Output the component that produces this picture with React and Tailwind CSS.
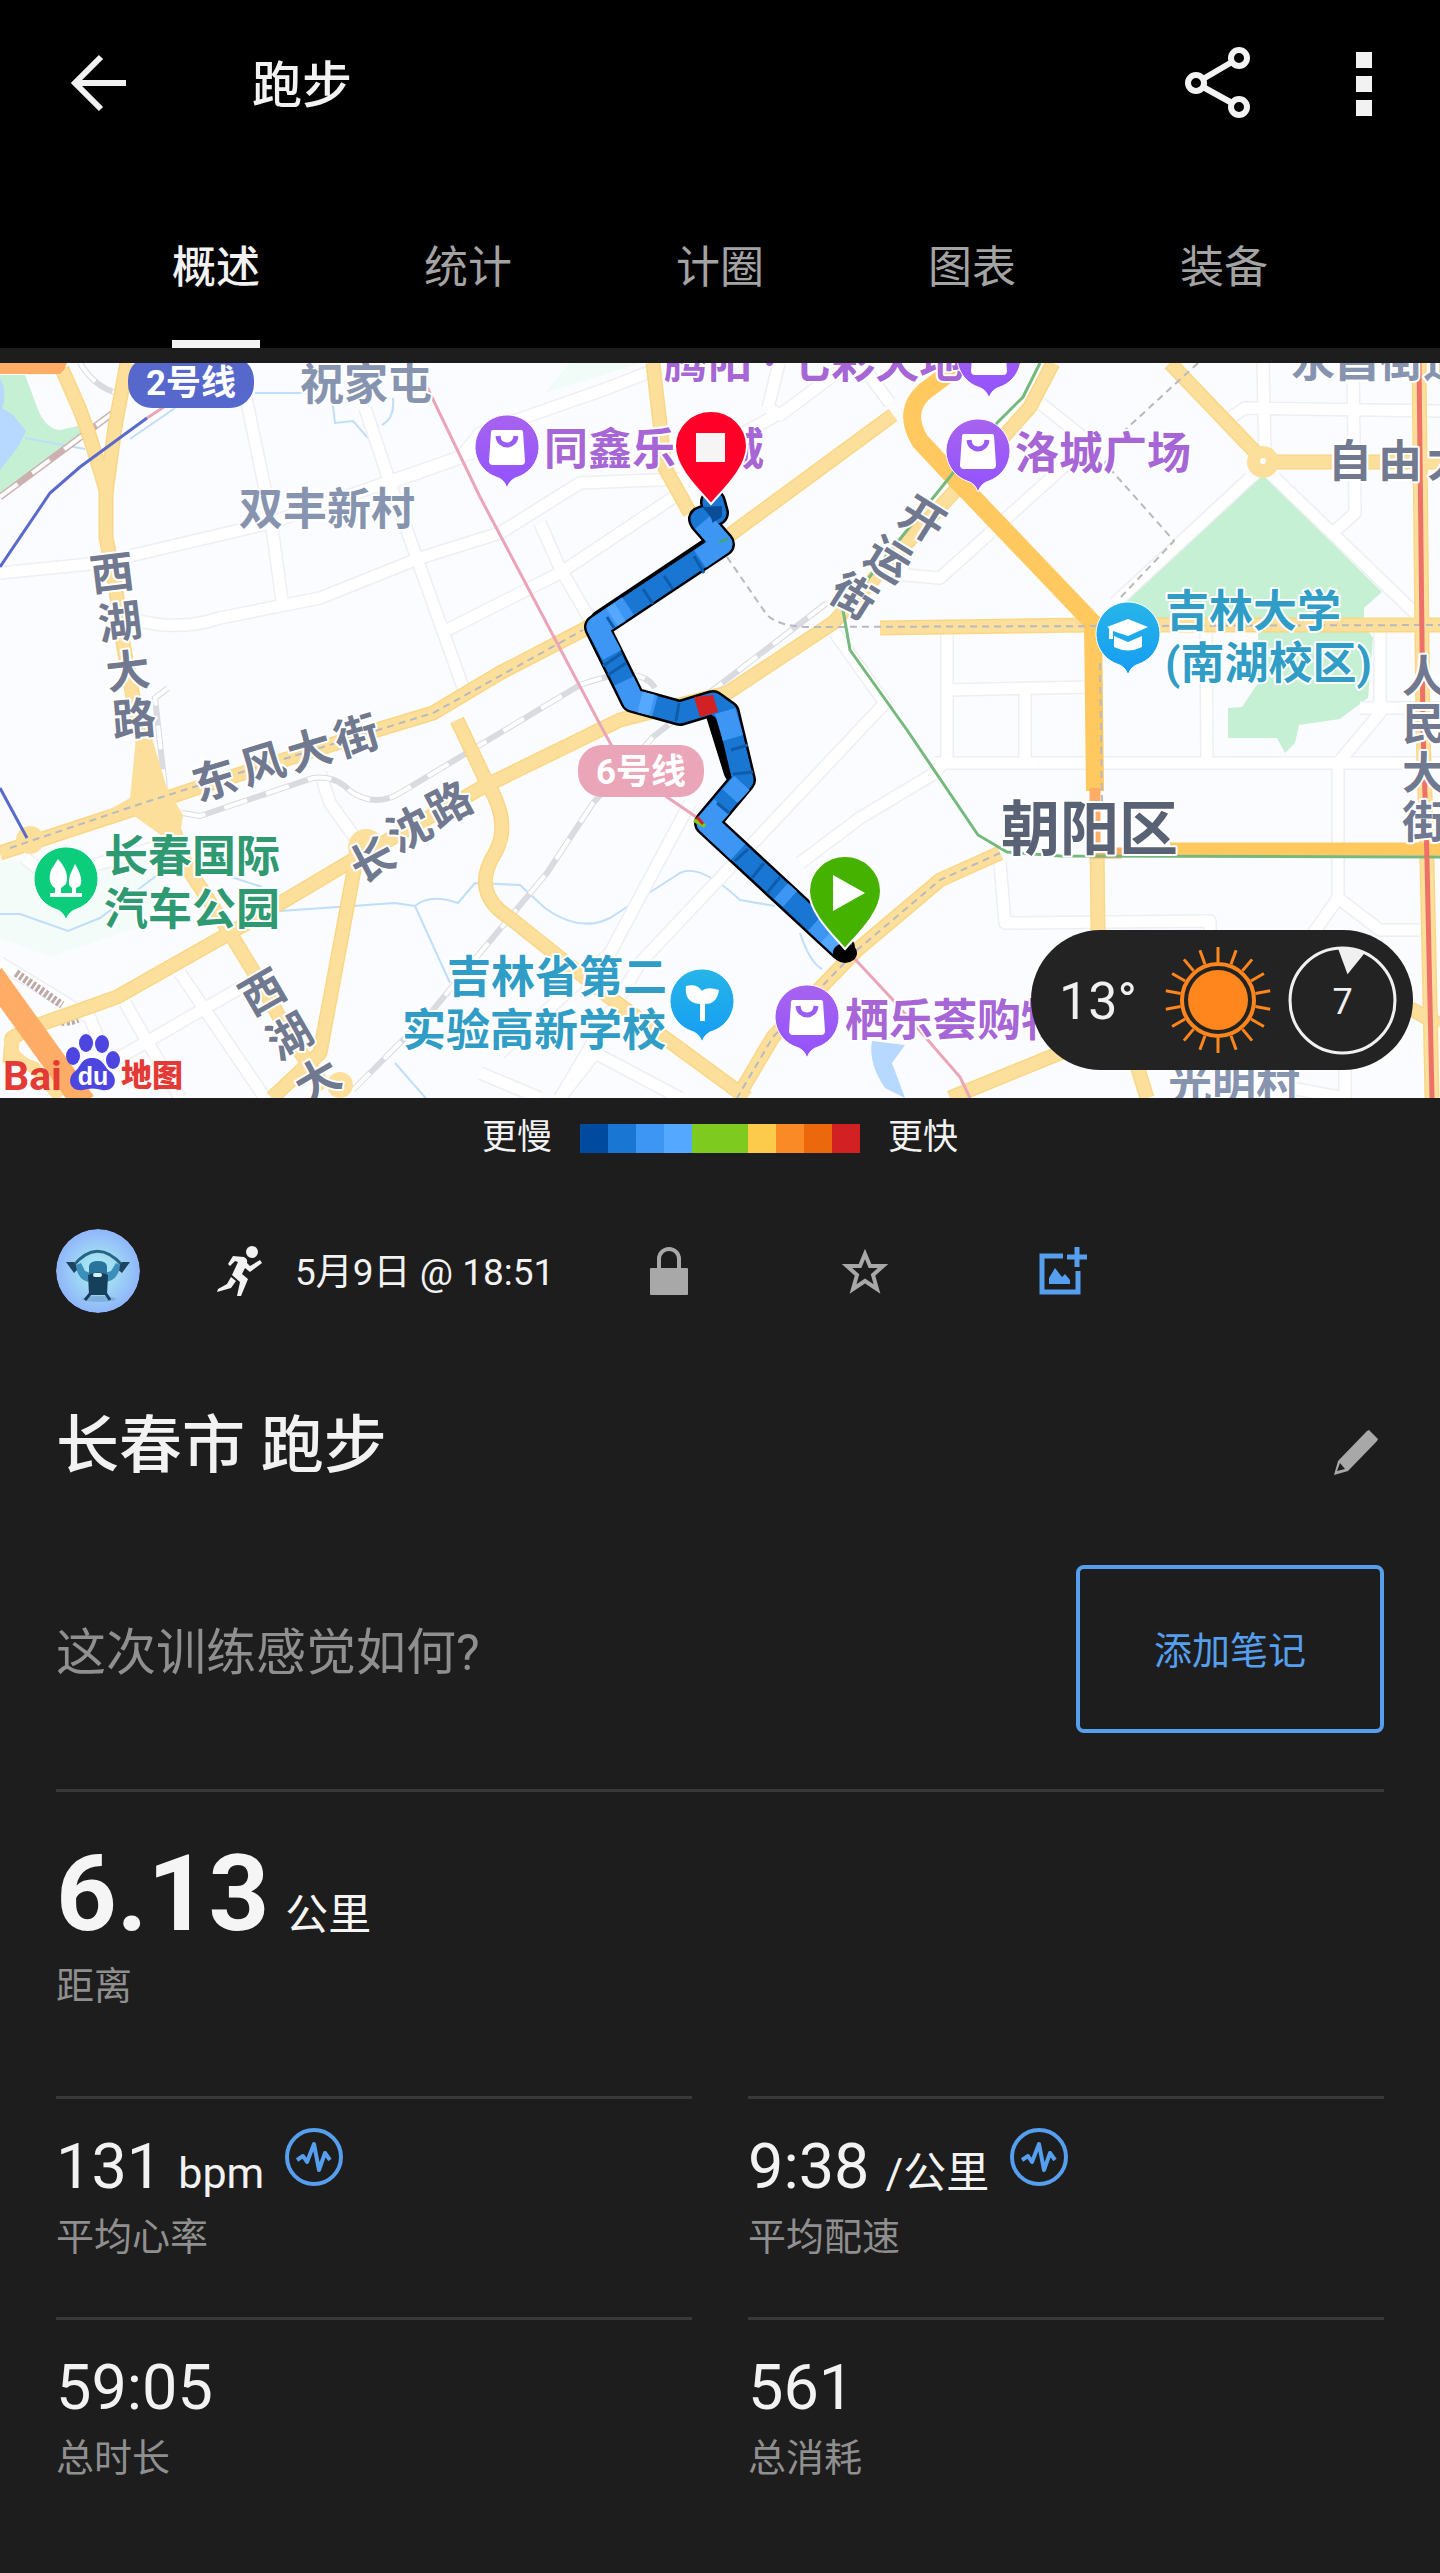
import React, { useState } from "react";

const tabs = ["概述", "统计", "计圈", "图表", "装备"];

const legendColors = [
  "bg-[#004b9f]",
  "bg-[#1976d2]",
  "bg-[#3d96f4]",
  "bg-[#55a8ff]",
  "bg-[#7fca1e]",
  "bg-[#7fca1e]",
  "bg-[#fccb4b]",
  "bg-[#fa8a26]",
  "bg-[#ec680d]",
  "bg-[#d32023]",
];

const stats = [
  { value: "131", unit: "bpm", label: "平均心率", chart: true },
  { value: "9:38", unit: "/公里", label: "平均配速", chart: true },
  { value: "59:05", label: "总时长" },
  { value: "561", label: "总消耗" },
];

// side streets, drawn white with a thin outline
const streets = [
  "M0 210 L100 200 L270 160 L500 80",
  "M245 30 L270 150 L282 238",
  "M140 258 Q180 268 220 255 L320 235 L420 195 L500 170 L580 120 L680 116",
  "M365 45 L390 120 L440 260 L465 330",
  "M390 120 L460 95 L480 70 L600 28 L660 5",
  "M445 268 L560 210 L680 130",
  "M540 160 L560 205 L595 265",
  "M768 45 L779 0 M768 45 L780 52 L850 0 M740 72 L780 50",
  "M860 0 L890 40",
  "M1040 40 L1090 80 L940 215 L905 212 L890 180",
  "M1265 92 L1263 0 M1230 55 L1245 45 L1440 48 M1353 0 L1355 150 L1335 168",
  "M1250 115 L1115 240",
  "M1275 115 L1415 250",
  "M947 270 L947 395 L935 410 L860 455 L800 500",
  "M947 327 L1090 324 M1025 327 L1025 398 M1206 270 L1207 396",
  "M935 400 L1440 400 M1380 270 L1380 350 L1338 400 L1338 535 L1310 575 M1338 535 L1380 567 L1420 567",
  "M1360 345 L1440 345",
  "M835 270 L885 340 L640 600 L560 735",
  "M1000 500 L1005 560 L1210 558 L1210 590",
  "M320 410 L330 440 L355 475",
  "M25 495 L50 515 L170 480",
  "M180 610 L265 735 M125 640 L180 735 M110 700 L240 625",
  "M595 690 L680 735 M480 710 L540 735 M595 690 L560 735",
  "M1345 735 L1345 700 M1290 725 L1345 735",
  "M690 440 L610 590 L500 690",
  "M0 600 L90 655 L100 680",
];

const yellowRoads = [
  "M62 6 L80 47 L90 74 L106 127 L106 174 L115 220 L123 280 L133 334 L143 377 L150 437 L170 457 L187 504 L230 570 L263 624 L290 674 L325 725",
  "M127 0 L115 64 L106 130",
  "M0 490 L143 443 L200 424 L380 366 L433 350 L500 310 L583 267 L727 174 L893 52",
  "M10 700 L12 675 L30 665 L117 634 L230 570 L353 497 L483 424 L620 357 L727 330 L833 260 L953 130 L1030 44 L1053 0",
  "M653 0 L665 105 L690 150",
  "M457 357 L487 420 Q512 460 495 490 Q470 530 510 555 L613 637 L747 735",
  "M360 475 L320 690 L272 735",
  "M880 265 L1087 262 L1440 262",
  "M1170 0 L1260 94",
  "M1270 99 L1440 99",
  "M1419 0 L1423 367 L1427 497 L1432 735",
  "M1000 490 L940 517 L857 587 L773 674 L737 735",
  "M1097 480 L1098 567 L1130 680 L1147 735",
  "M950 735 L1060 690 L1200 640 L1413 647 L1440 662",
];

const dashedLines = [
  "M10 485 L143 440 L200 422 L433 350 L583 267",
  "M727 194 L767 252 Q780 264 810 264 L1440 262",
  "M1198 0 L1125 67 L1105 100 L1174 178 L1120 235",
  "M1100 300 L1102 440",
  "M1000 490 L940 517 L857 587 L773 674 L737 735",
];

const railLines = [
  "M168 325 L155 335 L165 425 M182 450 L200 453 L313 415 Q335 412 350 428 Q375 445 400 430 L500 370 L580 322 Q640 300 655 325",
  "M827 240 L713 327 L653 374 L593 440 L547 510 L480 590 L433 647 L353 727",
  "M80 0 Q95 25 118 30",
];

// single-character labels that follow a road
const roadChars = [
  ["西", 112, 211, -7],
  ["湖", 120, 260, -7],
  ["大", 128, 309, -7],
  ["路", 134, 357, -5],
  ["东", 215, 418, -17],
  ["风", 263, 402, -17],
  ["大", 310, 388, -17],
  ["街", 357, 374, -17],
  ["长", 373, 498, -28],
  ["沈", 410, 467, -28],
  ["路", 450, 442, -28],
  ["开", 922, 157, 32],
  ["运", 888, 197, 32],
  ["街", 853, 234, 32],
  ["西", 263, 630, -30],
  ["湖", 290, 674, -30],
  ["大", 318, 718, -30],
  ["自", 1350, 99, 0],
  ["由", 1400, 99, 0],
  ["大", 1449, 99, 0],
  ["人", 1424, 314, 0],
  ["民", 1424, 362, 0],
  ["大", 1424, 411, 0],
  ["街", 1424, 460, 0],
];

const placeLabels = [
  { text: "祝家屯", x: 300, y: 22, color: "#8794b0" },
  { text: "双丰新村", x: 239, y: 147, color: "#8794b0" },
  { text: "永昌街道", x: 1291, y: -1, color: "#8794b0" },
  { text: "光明村", x: 1168, y: 723, color: "#8794b0" },
  { text: "腾阳 · 七彩天地", x: 664, y: 0, color: "#a666d6" },
  { text: "同鑫乐", x: 544, y: 87, color: "#a666d6" },
  { text: "城", x: 720, y: 87, color: "#a666d6" },
  { text: "洛城广场", x: 1015, y: 91, color: "#a666d6" },
  { text: "栖乐荟购物", x: 845, y: 658, color: "#a666d6" },
  { text: "吉林大学", x: 1165, y: 249, color: "#2f9dc6" },
  { text: "(南湖校区)", x: 1165, y: 301, color: "#2f9dc6" },
  { text: "吉林省第二", x: 447, y: 615, color: "#2f9dc6" },
  { text: "实验高新学校", x: 402, y: 668, color: "#2f9dc6" },
  { text: "长春国际", x: 104, y: 494, color: "#2f9a72" },
  { text: "汽车公园", x: 104, y: 547, color: "#2f9a72" },
];

const routePath =
  "M713 139 L716 150 L701 156 L702 158 L722 181 L597 264 L633 337 L680 350 L713 340 L727 350 L743 417 L707 460 L842 585";

function Pin({ x, y, fill, children }) {
  return (
    <g transform={`translate(${x} ${y})`}>
      <path
        d="M0 41 Q-3 32 -11 30 A32 32 0 1 1 11 30 Q3 32 0 41Z"
        fill={fill}
        stroke="#fff"
        strokeWidth="1"
      />
      {children}
    </g>
  );
}

function ShopPin({ x, y }) {
  return (
    <Pin x={x} y={y} fill="url(#shop)">
      <path
        d="M-14 -17 H14 Q16 -17 16 -15 L18 14 Q18 18 14 18 H-14 Q-18 18 -18 14 L-16 -15 Q-16 -17 -14 -17Z"
        fill="#fff"
      />
      <path d="M-9 -11 C-8 1 8 1 9 -11" fill="none" stroke="#9b5cf5" strokeWidth="5" />
    </Pin>
  );
}

function RoutePin({ x, y, fill, children }) {
  return (
    <g transform={`translate(${x} ${y})`}>
      <path
        d="M0 58 C-12 44 -36 22 -36 0 A36 35 0 0 1 36 0 C36 22 12 44 0 58Z"
        fill={fill}
        stroke="#fff"
        strokeWidth="2"
      />
      {children}
    </g>
  );
}

function LineBadge({ x, y, fill, text }) {
  return (
    <g>
      <rect x={x} y={y} width="126" height="52" rx="24" fill={fill} />
      <text x={x + 63} y={y + 39} textAnchor="middle" fontSize="35" fontWeight="700" fill="#fff">
        {text}
      </text>
    </g>
  );
}

function RouteMap() {
  return (
    <svg
      viewBox="0 0 1440 735"
      className="block w-full h-auto font-[Roboto,'Noto_Sans_CJK_SC',sans-serif]"
      role="img"
      aria-label="路线地图"
    >
      <defs>
        <linearGradient id="shop" x1="0" y1="0" x2="0" y2="1">
          <stop offset="0" stopColor="#a763ee" />
          <stop offset="1" stopColor="#9253ff" />
        </linearGradient>
        <linearGradient id="school" x1="0" y1="0" x2="0" y2="1">
          <stop offset="0" stopColor="#27b5e8" />
          <stop offset="1" stopColor="#159cf3" />
        </linearGradient>
      </defs>

      <rect width="1440" height="735" fill="#fbfcff" />

      {/* 公园和水面 */}
      <path d="M0 500 L170 490 L150 560 L50 594 L0 575Z" fill="#f3fcf9" />
      <path d="M545 30 L640 0 H570Z" fill="#f1fbf7" />
      <path d="M0 12 H25 L37 44 Q45 66 60 67 L82 62 L83 76 L0 130Z" fill="#c5f0d4" />
      <path d="M0 15 Q8 30 2 45 L13 52 L26 68 L18 84 L0 107Z" fill="#b7d8ff" />
      <path d="M1263 112 L1382 229 L1364 245 V262 L1373 275 L1368 335 L1340 356 L1299 362 L1295 380 L1285 390 L1277 375 H1228 V345 L1242 344 L1258 320 V262 L1120 260 L1115 245Z" fill="#c5f0d4" />
      <path d="M872 678 L905 682 L892 700 L905 735 L885 725 Q868 700 872 678Z" fill="#b7d8ff" />
      <g fill="none" stroke="#c0defa" strokeWidth="2">
        <path d="M0 551 L20 551 L68 568 L100 555 L160 510 M225 512 L262 524 M280 548 L395 540 L415 543 Q430 530 458 540 L475 520 L520 522 L545 545 Q580 570 610 555 L680 510 Q700 500 740 537 L775 543" />
        <path d="M415 543 L450 620 M255 30 L310 30 M332 35 L335 60 L353 58 L368 75 M393 35 Q395 55 382 62 M130 76 L175 45 M25 75 L85 86" />
        <path d="M800 570 Q810 600 822 606 M395 700 L430 740" />
      </g>

      {/* 街道 */}
      <g fill="none" stroke="#edeff4" strokeWidth="14" strokeLinejoin="round">
        {streets.map((d) => <path key={d} d={d} />)}
      </g>
      <g fill="none" stroke="#fff" strokeWidth="11" strokeLinejoin="round">
        {streets.map((d) => <path key={d} d={d} />)}
      </g>

      {/* 铁路 */}
      <g fill="none">
        {railLines.map((d) => (
          <g key={d}>
            <path d={d} stroke="#dadbe1" strokeWidth="6" />
            <path d={d} stroke="#fff" strokeWidth="4" strokeDasharray="24 20" />
          </g>
        ))}
        <path d="M0 134 L117 47" stroke="#cdb0b0" strokeWidth="7" />
        <path d="M0 134 L117 47" stroke="#fff" strokeWidth="4" strokeDasharray="22 18" />
        <path d="M16 610 L62 642 M58 650 Q56 664 78 656" stroke="#bda8a6" strokeWidth="8" strokeDasharray="3 2" />
      </g>

      {/* 主干道 */}
      <g fill="none" stroke="#f9d786" strokeWidth="15" strokeLinejoin="round">
        {yellowRoads.map((d) => <path key={d} d={d} />)}
      </g>
      <g fill="none" stroke="#fddf9c" strokeWidth="12" strokeLinejoin="round">
        {yellowRoads.map((d) => <path key={d} d={d} />)}
      </g>
      <path d="M136 375 H152 L167 425 L183 452 L180 472 L165 475 L130 450 L100 452 L130 435Z" fill="#fddf9c" />
      <circle cx="30" cy="477" r="14" fill="#fddf9c" />
      <circle cx="366" cy="484" r="18" fill="#fddf9c" />
      <circle cx="340" cy="722" r="13" fill="#fddf9c" />
      <circle cx="1263" cy="99" r="16" fill="#fddf9c" />
      <circle cx="1263" cy="98" r="3" fill="#fff" />
      <path d="M10 675 Q8 695 35 705 L60 735" fill="none" stroke="#fddf9c" strokeWidth="12" />
      <g fill="none" stroke="#ffc960" strokeLinejoin="round" strokeWidth="18">
        <path d="M960 2 L925 28 Q902 48 920 78 L947 107 L1093 260 L1095 428" />
        <path d="M1170 486 H1440" strokeWidth="13" />
      </g>
      <path d="M1095 425 V490 H1122" fill="none" stroke="#ffad66" strokeWidth="11" />
      <path d="M0 0 H67 L64 7 L60 11 H0Z" fill="#ffad66" />
      <path d="M-8 612 L84 740" stroke="#ffad66" strokeWidth="24" />

      <g fill="none" stroke="#b9b9c0" strokeWidth="2" strokeDasharray="7 5">
        {dashedLines.map((d) => <path key={d} d={d} />)}
      </g>

      {/* 地铁线 */}
      <g fill="none" strokeWidth="3">
        <path d="M427 24 L480 134 L603 367 L613 385 L667 434 L705 460 M853 594 L893 637 L960 714 L970 735 M147 55 L170 40" stroke="#eaa5b9" />
        <path d="M0 204 L50 130 L80 104 L147 55 M0 425 L27 475" stroke="#5a6acb" />
        <path d="M1040 0 L1023 34 L997 60 L953 110 L843 247 L850 287 L907 367 L978 472 L1007 489 L1060 493 L1440 494" stroke="#76b97c" />
        <path d="M1419 0 L1423 367 L1427 497 L1432 735" stroke="#ee7169" strokeWidth="5" />
      </g>

      <g fontWeight="700" fontSize="44" stroke="#fff" strokeWidth="4" paintOrder="stroke" strokeLinejoin="round">
        {placeLabels.map((l) => (
          <text key={l.text} x={l.x} y={l.y + 15} fill={l.color}>
            {l.text}
          </text>
        ))}
        {roadChars.map(([ch, x, y, r], i) => (
          <text key={i} transform={`translate(${x} ${y}) rotate(${r})`} y="15" textAnchor="middle" fill="#70798f">
            {ch}
          </text>
        ))}
        <text x="1001" y="487" fontSize="59" fill="#596175">
          朝阳区
        </text>
      </g>

      <LineBadge x={128} y={-7} fill="#5668cc" text="2号线" />
      <LineBadge x={578} y={382} fill="#eaa5b9" text="6号线" />

      <ShopPin x={507} y={84} />
      <ShopPin x={978} y={88} />
      <ShopPin x={989} y={-6} />
      <ShopPin x={807} y={654} />
      <Pin x={1128} y={271} fill="url(#school)">
        <path d="M-21 -7 L0 -15 L20 -7 L0 2 L-15 -3 V5 H-19 V-6Z M-14 2 L0 8 L14 2 V13 Q0 20 -14 13Z" fill="#fff" />
      </Pin>
      <Pin x={702} y={638} fill="url(#school)">
        <path d="M-16 -15 Q-5 -18 0 -10 Q5 -15 17 -11 Q15 3 3 3 V20 H-2 V3 Q-18 2 -16 -15Z" fill="#fff" />
      </Pin>
      <Pin x={66} y={516} fill="#0bcd7c">
        <path d="M-8 -20 Q4 -7 0 5 L-5 9 V14 H6 V9 Q1 7 4 -4 L9 -15 Q18 0 14 7 L10 9 V14 H16 V18 H-16 V14 H-11 V9 Q-19 4 -15 -9Z" fill="#fff" />
      </Pin>

      {/* 跑步轨迹 */}
      <g fill="none" strokeLinejoin="round" strokeLinecap="round">
        <path d={routePath} stroke="#000" strokeWidth="26" />
        <path d="M714 184 L602 259 M718 350 L736 408" stroke="#000" strokeWidth="25" />
        <path d={routePath} stroke="#1976d2" strokeWidth="21" />
      </g>
      <g fill="none" stroke="#3d96f4" strokeWidth="21" strokeLinejoin="round">
        <path d="M703 159 L722 181 L700 196 M628 243 L597 264 L612 292 M624 318 L633 337 L655 343 M725 348 L733 375" />
        <path d="M742 420 L730 433 M722 443 L707 460 L738 489 M781 528 L790 536 M815 560 L842 585" />
        <path d="M620 249 L612 254 M640 339 L652 342 M828 572 L838 581" stroke="#55a8ff" />
      </g>
      <g fill="none" stroke="#0f5cab" strokeWidth="3">
        <path d="M694 193 L704 210 M664 213 L673 226 M643 226 L653 241 M607 254 L614 265 M603 303 L622 290 M608 312 L626 300 M679 340 L676 358 M731 387 L748 382 M733 411 L753 409 M717 440 L729 450 M735 498 L748 486 M752 515 L764 500 M767 530 L780 514" />
        <path d="M702 144 Q714 156 712 160 L722 154 V143Z" fill="#0b4c96" stroke="none" />
      </g>
      <path d="M694 334 L713 332 L718 349 L700 354Z" fill="#d32023" />
      <path d="M694 457 L705 463" stroke="#7fca1e" strokeWidth="4" />
      <path d="M697 454 L703 461" stroke="#d32023" strokeWidth="3" />
      <path d="M719 179 L728 176" stroke="#45a85c" strokeWidth="2" />
      <ellipse cx="845" cy="590" rx="12" ry="10" fill="#000" />
      <RoutePin x={711} y={83} fill="#ff0029">
        <rect x="-15" y="-13" width="29" height="29" fill="#f5f5f5" />
      </RoutePin>
      <RoutePin x={845} y={528} fill="#46b200">
        <path d="M-12 -16 L20 2 L-12 20Z" fill="#fff" />
      </RoutePin>

      {/* Baidu */}
      <g fontWeight="700">
        <text x="3" y="727" fontSize="41" fill="#e43a35">
          Bai
        </text>
        <text x="121" y="723" fontSize="31" fill="#e43a35" fontWeight="900">
          地图
        </text>
        <g fill="#4d45e0">
          <ellipse cx="73" cy="693" rx="7" ry="9" />
          <ellipse cx="86" cy="680" rx="7" ry="9" />
          <ellipse cx="102" cy="681" rx="7" ry="9" />
          <ellipse cx="113" cy="697" rx="7" ry="9" />
          <path d="M92 695 C80 695 81 705 74 709 C66 717 71 729 83 727 Q93 724 102 727 C114 729 119 717 111 709 C104 705 104 695 92 695Z" />
        </g>
        <text x="93" y="722" fontSize="25" textAnchor="middle" fill="#fff" className="font-['Liberation_Sans',sans-serif]">
          du
        </text>
      </g>
    </svg>
  );
}

function Weather() {
  const rays = Array.from({ length: 18 }, (_, i) => i * 20);
  return (
    <div className="absolute right-[27px] bottom-7 h-[140px] pl-7 pr-4 flex items-center rounded-full bg-[#232323] text-[#f0f0f0]">
      <span className="pt-1 w-[105px] text-[52px] leading-none">13°</span>
      <svg viewBox="-54 -54 108 108" className="size-[108px]" aria-hidden="true">
        <circle r="30" fill="#ff861c" />
        <circle r="36" fill="none" stroke="#ff861c" strokeWidth="4" />
        {rays.map((a) => (
          <path key={a} d="M0 -38 V-53" stroke="#ff861c" strokeWidth="3" transform={`rotate(${a})`} />
        ))}
      </svg>
      <div className="relative ml-4 size-[109px] flex items-center justify-center">
        <svg viewBox="-54 -54 108 108" className="absolute inset-0 size-full" aria-hidden="true">
          <circle r="52" fill="none" stroke="#f0f0f0" strokeWidth="3" />
          <path d="M-5 -53 Q10 -54 22 -47 L5 -26Z" fill="#f0f0f0" />
        </svg>
        <span className="pt-1 text-4xl">7</span>
      </div>
    </div>
  );
}

function Avatar() {
  return (
    <svg viewBox="0 0 84 84" className="size-[84px] rounded-full" aria-hidden="true">
      <defs>
        <radialGradient id="sky">
          <stop offset="0.3" stopColor="#a5e2f4" />
          <stop offset="1" stopColor="#8fb5fa" />
        </radialGradient>
      </defs>
      <circle cx="42" cy="42" r="42" fill="url(#sky)" />
      <ellipse cx="43" cy="70" rx="17" ry="3" fill="#7fb0dd" />
      <path d="M17 37 Q41 8 66 36" fill="none" stroke="#27647f" strokeWidth="3" />
      <path d="M10 33 L18 33 L22 40 L18 44Z M74 33 L66 33 L61 40 L66 44Z" fill="#1d4560" />
      <path d="M20 36 Q21 50 32 53 L37 45 L29 42 L25 34Z M64 36 Q63 50 51 53 L46 45 L55 42 L60 34Z" fill="#3b8fb8" />
      <path d="M33 53 V37 Q34 32 42 32 Q50 32 51 37 V53Z" fill="#28749c" />
      <path d="M32 46 Q42 41 52 46 L51 66 H33Z" fill="#163f5c" />
      <rect x="37" y="44" width="9" height="4" rx="2" fill="#d5eef7" />
      <path d="M34 65 L29 71 M50 65 L54 71" stroke="#163f5c" strokeWidth="3" />
    </svg>
  );
}

function ChartButton({ label }) {
  return (
    <button type="button" aria-label={label} className="ml-5 text-[#559fee]">
      <svg viewBox="0 0 60 60" className="size-[60px]" fill="none" stroke="currentColor">
        <circle cx="30" cy="30" r="27" strokeWidth="4" />
        <path d="M13 33 L19 29 L23 35 L30 17 L35 43 L41 26 L46 33" strokeWidth="4" strokeLinejoin="round" />
      </svg>
    </button>
  );
}

function Stat({ item }) {
  return (
    <div className="border-t-3 border-[#383838] pt-7 pb-[58px]">
      <div className="h-20 flex items-start">
        <p className="text-[63px] leading-[80px] text-[#f2f2f2]">
          {item.value}
          {item.unit && <span className="ml-4 text-[43px] leading-none">{item.unit}</span>}
        </p>
        {item.chart && <ChartButton label={item.label + "图表"} />}
      </div>
      <p className="mt-2 text-[38px] leading-[44px] text-[#8f8f8f]">{item.label}</p>
    </div>
  );
}

function App() {
  const [active, setActive] = useState("概述");

  return (
    <div className="min-h-screen bg-[#1d1d1d] text-[#f2f2f2] font-[Roboto,'Noto_Sans_CJK_SC',sans-serif]">
      <header className="bg-black">
        <div className="h-[168px] px-[68px] flex items-center">
          <button type="button" aria-label="返回">
            <svg viewBox="0 0 60 60" className="size-[60px]" fill="none" stroke="currentColor" strokeWidth="6">
              <path d="M33 3 L7 29 L33 55 M7 29 H58" />
            </svg>
          </button>
          <h1 className="ml-[124px] pt-1 flex-1 text-[50px] font-medium">跑步</h1>
          <button type="button" aria-label="分享">
            <svg viewBox="0 0 66 74" className="w-[66px] h-[74px]" fill="none" stroke="currentColor" strokeWidth="6">
              <circle cx="55" cy="11" r="8" />
              <circle cx="12" cy="36" r="8" />
              <circle cx="55" cy="60" r="8" />
              <path d="M19 32 L48 15 M19 40 L48 56" />
            </svg>
          </button>
          <button type="button" aria-label="更多" className="ml-[106px] flex flex-col gap-2">
            <span className="size-4 bg-[#f2f2f2]" />
            <span className="size-4 bg-[#f2f2f2]" />
            <span className="size-4 bg-[#f2f2f2]" />
          </button>
        </div>
        <nav className="px-[90px] grid grid-cols-5">
          {tabs.map((t) => (
            <button
              key={t}
              type="button"
              onClick={() => setActive(t)}
              className={`h-[180px] flex flex-col items-center justify-end text-[44px] leading-[64px] ${
                active === t ? "text-[#f2f2f2] font-medium" : "text-[#a3a3a3]"
              }`}
            >
              {t}
              <span className={`mt-10 h-2 w-[88px] ${active === t ? "bg-[#f2f2f2]" : ""}`} />
            </button>
          ))}
        </nav>
      </header>

      <section className="relative mt-[15px]">
        <RouteMap />
        <Weather />
      </section>

      <div className="pt-4 flex items-center justify-center gap-7 text-[35px] leading-[48px]">
        <span>更慢</span>
        <div className="flex">
          {legendColors.map((c, i) => (
            <span key={i} className={`w-7 h-[29px] ${c}`} />
          ))}
        </div>
        <span>更快</span>
      </div>

      <main className="px-14">
        <div className="mt-[67px] flex items-center">
          <Avatar />
          <svg viewBox="0 0 46 50" className="ml-[77px] w-[46px] h-[50px]" fill="currentColor" aria-hidden="true">
            <circle cx="35" cy="6" r="6" />
            <path d="M16 10 L27 11 Q31 13 30 17 L33 20 L43 14 L45 17 L33 26 L28 22 L25 28 L31 33 L24 50 L20 50 L23 36 L15 29 L21 16 L18 15 L13 20 L11 18Z M14 31 L19 35 L14 42 L0 46 L1 43 L10 38Z" />
          </svg>
          <p className="ml-8 pt-1 w-[265px] text-[37px] whitespace-nowrap">5月9日 @ 18:51</p>
          <button type="button" aria-label="隐私" className="ml-[90px] text-[#a8a8a8]">
            <svg viewBox="0 0 38 48" className="w-[38px] h-12" fill="currentColor">
              <rect y="21" width="38" height="27" rx="1" />
              <path d="M9 23 V12 A10 10 0 0 1 29 12 V23" fill="none" stroke="currentColor" strokeWidth="4" />
            </svg>
          </button>
          <button type="button" aria-label="收藏" className="ml-[154px] text-[#a8a8a8]">
            <svg viewBox="0 0 46 46" className="size-[46px]" fill="none" stroke="currentColor" strokeWidth="4">
              <path d="M23 6 L28 18 L41 18 L31 27 L35 41 L23 33 L11 41 L15 27 L5 18 L18 18Z" />
            </svg>
          </button>
          <button type="button" aria-label="添加照片" className="ml-[151px] text-[#559fee]">
            <svg viewBox="0 0 48 48" className="size-12" fill="none" stroke="currentColor" strokeWidth="5">
              <path d="M24 9 H3 V45 H39 V24 M38 0 V20 M28 10 H48" />
              <path d="M10 37 V31 L16 21 L23 30 L26 27 L31 33 V37Z" fill="currentColor" stroke="none" />
            </svg>
          </button>
        </div>

        <div className="mt-[87px] flex items-center justify-between">
          <h2 className="text-[63px] leading-[92px] font-medium">长春市 跑步</h2>
          <button type="button" aria-label="编辑" className="mt-3 mr-1 text-[#a8a8a8]">
            <svg viewBox="0 0 48 48" className="size-12" fill="currentColor">
              <path d="M35 3 L37 2 L46 11 L45 13 L16 43 L2 47 L6 33Z M8 35 L5 43 L13 41Z" fillRule="evenodd" />
            </svg>
          </button>
        </div>

        <div className="mt-[73px] flex items-center justify-between">
          <p className="pt-2 text-[50px] text-[#8f8f8f]">这次训练感觉如何?</p>
          <button
            type="button"
            className="w-[308px] h-[168px] pt-1 border-4 border-[#559fee] rounded-lg text-[38px] text-[#559fee]"
          >
            添加笔记
          </button>
        </div>

        <div className="mt-14 border-t-3 border-[#383838] pt-9 pb-[88px]">
          <p className="text-[106px] leading-[132px] font-bold text-[#f5f5f5]">
            6.13
            <span className="ml-4 text-[43px] leading-none font-normal">公里</span>
          </p>
          <p className="mt-1 text-[38px] leading-[44px] text-[#8f8f8f]">距离</p>
        </div>

        <div className="grid grid-cols-2 gap-x-14">
          {stats.map((s) => (
            <Stat key={s.label} item={s} />
          ))}
        </div>
      </main>
    </div>
  );
}

export default App;
